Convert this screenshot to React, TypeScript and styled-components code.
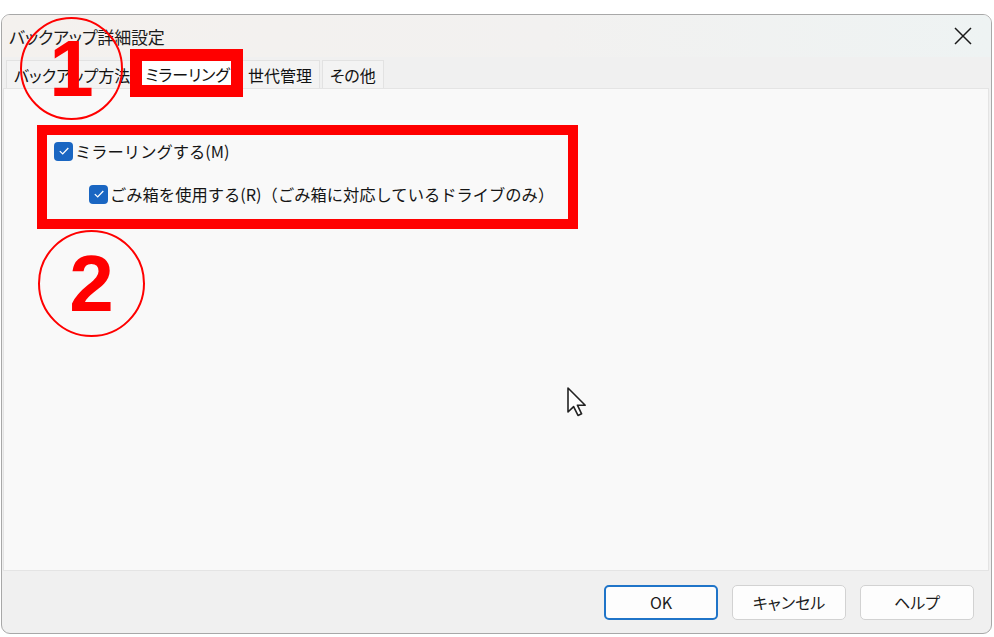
import React from "react";
import styled, { createGlobalStyle } from "styled-components";

const GlobalStyle = createGlobalStyle`
  html, body {
    margin: 0;
    padding: 0;
    background: #ffffff;
  }
  body {
    font-family: "Noto Sans CJK JP", "Noto Sans", sans-serif;
    font-feature-settings: "palt";
    color: #1a1a1a;
  }
`;

const Page = styled.div`
  position: relative;
  width: 994px;
  height: 637px;
  padding: 14px 2px 3px 1px;
  box-sizing: border-box;
  overflow: hidden;
`;

const Window = styled.div`
  display: flex;
  flex-direction: column;
  height: 100%;
  box-sizing: border-box;
  border: 1px solid #a8a8a8;
  border-radius: 9px;
  background: #f0f0f0;
  overflow: hidden;
`;

const TitleBar = styled.div`
  display: flex;
  align-items: center;
  justify-content: space-between;
  height: 42px;
  padding: 0 14px 0 7px;
  background: linear-gradient(90deg, #f4f1ee 0%, #f2f1f0 55%, #eef3f3 100%);
`;

const Title = styled.span`
  font-size: 17px;
  color: #1c1c1c;
  letter-spacing: -0.2px;
`;

const CloseButton = styled.button`
  display: flex;
  align-items: center;
  justify-content: center;
  width: 28px;
  height: 28px;
  padding: 0;
  border: none;
  background: transparent;
`;

const TabStrip = styled.div`
  display: flex;
  align-items: flex-end;
  height: 31px;
  padding-left: 4px;
`;

const Tab = styled.div<{ $active?: boolean }>`
  display: flex;
  align-items: center;
  height: ${(p) => (p.$active ? "29px" : "27px")};
  padding: 0 ${(p) => (p.$active ? "4px" : "7px")};
  margin-right: ${(p) => (p.$active ? "5px" : "2px")};
  background: ${(p) => (p.$active ? "#ffffff" : "#f3f3f3")};
  border: 1px solid #e2e2e2;
  border-bottom: none;
  font-size: 16px;
  color: #111;
  white-space: nowrap;
`;

const Panel = styled.div`
  flex: 1;
  margin: 0 2px 0 1px;
  padding: 50px 0 0 50px;
  background: #f9f9f9;
  border: 1px solid #e4e4e4;
  display: flex;
  flex-direction: column;
  gap: 19px;
`;

const CheckRow = styled.label<{ $indent?: number }>`
  display: flex;
  align-items: center;
  gap: 2px;
  height: 24px;
  margin-left: ${(p) => p.$indent ?? 0}px;
  font-size: 16.3px;
  font-feature-settings: normal;
  color: #151515;
  white-space: nowrap;
`;

const Box = styled.span`
  display: inline-flex;
  align-items: center;
  justify-content: center;
  width: 19px;
  height: 19px;
  border-radius: 4px;
  background: #1a66c2;
`;

const Footer = styled.div`
  display: flex;
  align-items: center;
  justify-content: flex-end;
  gap: 14px;
  height: 62px;
  padding-right: 17px;
`;

const DialogButton = styled.button<{ $primary?: boolean }>`
  width: 114px;
  height: 35px;
  border-radius: 5px;
  background: #fdfdfd;
  border: ${(p) => (p.$primary ? "2px solid #1f74c8" : "1px solid #d2d2d2")};
  font-family: "Noto Sans CJK JP", "Noto Sans", sans-serif;
  font-feature-settings: "palt";
  font-size: 16px;
  color: #1b1b1b;
`;

const RedFrame = styled.div<{ $x: number; $y: number; $w: number; $h: number; $t: number }>`
  position: absolute;
  left: ${(p) => p.$x}px;
  top: ${(p) => p.$y}px;
  width: ${(p) => p.$w}px;
  height: ${(p) => p.$h}px;
  box-sizing: border-box;
  border: ${(p) => p.$t}px solid #ff0000;
  pointer-events: none;
`;

const Badge = styled.div<{ $x: number; $y: number; $d: number }>`
  position: absolute;
  left: ${(p) => p.$x}px;
  top: ${(p) => p.$y}px;
  width: ${(p) => p.$d}px;
  height: ${(p) => p.$d}px;
  box-sizing: border-box;
  border: 2px solid #ff0000;
  border-radius: 50%;
  display: flex;
  align-items: center;
  justify-content: center;
  font-family: "Liberation Sans", "Noto Sans", sans-serif;
  font-weight: 700;
  font-size: 80px;
  line-height: 1;
  color: #ff0000;
  pointer-events: none;
`;

const Cursor = styled.svg`
  position: absolute;
  left: 567px;
  top: 387px;
`;

function Check() {
  return (
    <Box>
      <svg width="12" height="10" viewBox="0 0 12 10">
        <path d="M1.8 5.1 L4.7 7.9 L10.3 2" fill="none" stroke="#ffffff" strokeWidth="1.3" />
      </svg>
    </Box>
  );
}

export default function App() {
  return (
    <>
      <GlobalStyle />
      <Page>
        <Window>
          <TitleBar>
            <Title>バックアップ詳細設定</Title>
            <CloseButton aria-label="閉じる">
              <svg width="18" height="18" viewBox="0 0 18 18">
                <path d="M1 1 L17 17 M17 1 L1 17" stroke="#1a1a1a" strokeWidth="1.5" />
              </svg>
            </CloseButton>
          </TitleBar>
          <TabStrip>
            <Tab>バックアップ方法</Tab>
            <Tab $active>ミラーリング</Tab>
            <Tab>世代管理</Tab>
            <Tab>その他</Tab>
          </TabStrip>
          <Panel>
            <CheckRow>
              <Check />
              ミラーリングする(M)
            </CheckRow>
            <CheckRow $indent={35}>
              <Check />
              ごみ箱を使用する(R)（ごみ箱に対応しているドライブのみ）
            </CheckRow>
          </Panel>
          <Footer>
            <DialogButton $primary>OK</DialogButton>
            <DialogButton>キャンセル</DialogButton>
            <DialogButton>ヘルプ</DialogButton>
          </Footer>
        </Window>

        <Badge $x={20} $y={17} $d={103}>1</Badge>
        <Badge $x={38} $y={230} $d={107}>2</Badge>
        <RedFrame $x={130} $y={49} $w={113} $h={48} $t={12} />
        <RedFrame $x={37} $y={125} $w={541} $h={104} $t={10} />

        <Cursor width="22" height="30" viewBox="0 0 22 30">
          <path
            d="M1 1 L1 25 L6.6 19.6 L11 28.4 L14.6 26.8 L10.4 18.2 L18.2 18.2 Z"
            fill="#ffffff"
            stroke="#222222"
            strokeWidth="1.6"
            strokeLinejoin="round"
          />
        </Cursor>
      </Page>
    </>
  );
}
